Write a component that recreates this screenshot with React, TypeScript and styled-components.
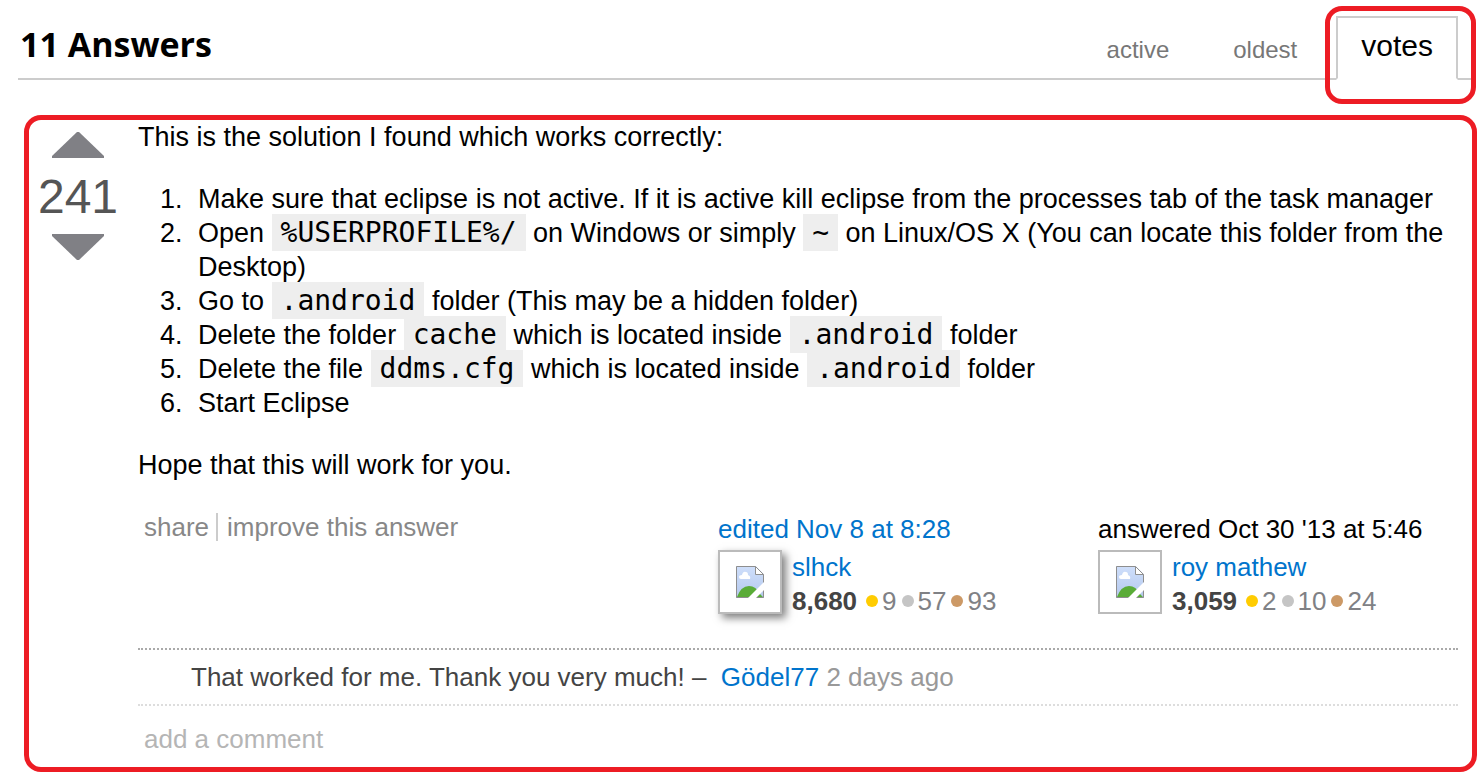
import React from "react";
import styled, { createGlobalStyle, css } from "styled-components";

const GlobalStyle = createGlobalStyle`
  *, *::before, *::after { box-sizing: border-box; }
  body {
    margin: 0;
    background: #fff;
    color: #000;
    font-family: Arial, "Liberation Sans", sans-serif;
    font-size: 26px;
    line-height: 34px;
  }
`;

const Page = styled.main`
  padding: 0 7px 8px 0;
`;

const Header = styled.header`
  display: flex;
  align-items: stretch;
  justify-content: space-between;
  height: 80px;
  margin: 0 5px 35px 18px;
  border-bottom: 2px solid #ccc;
`;

const Title = styled.h2`
  margin: 0;
  padding: 22px 0 0 2px;
  font-family: "Trebuchet MS", "Open Sans", sans-serif;
  font-size: 34px;
  font-weight: 700;
  line-height: 44px;
`;

const Tabs = styled.nav`
  display: flex;
  align-items: flex-start;
`;

const tabBase = css`
  text-decoration: none;
  white-space: nowrap;
`;

const Tab = styled.a`
  ${tabBase}
  margin: 33px 32px 0;
  color: #777;
  font-size: 24px;
`;

const ActiveTabWrap = styled.div`
  position: relative;
  margin: 16px 14px 0 7px;
`;

const ActiveTab = styled.a`
  ${tabBase}
  display: block;
  height: 64px;
  padding: 11px 23px 0;
  border: 2px solid #ccc;
  border-bottom-color: #fff;
  background: #fff;
  color: #000;
  font-size: 30px;
`;

const TabHighlight = styled.span`
  position: absolute;
  inset: -10px -18px -24px -11px;
  border: 5px solid #ed1c24;
  border-radius: 17px;
  pointer-events: none;
`;

const Answer = styled.article`
  display: flex;
  gap: 11px;
  margin-left: 24px;
  padding-right: 14px;
  border: 5px solid #ed1c24;
  border-radius: 17px;
`;

const Votes = styled.div`
  display: flex;
  flex: 0 0 98px;
  flex-direction: column;
  align-items: center;
  padding-top: 11px;
`;

const VoteButton = styled.button`
  display: block;
  padding: 0;
  border: 0;
  background: none;
  cursor: pointer;

  svg { display: block; }
`;

const Score = styled.span`
  margin: 10px 0 8px;
  color: #555;
  font-size: 48px;
  line-height: 56px;
`;

const Body = styled.div`
  flex: 1;
  min-width: 0;
`;

const Post = styled.div`
  font-size: 27px;

  p { margin: 0 0 28px; }
  ol { margin: 0 0 28px; padding-left: 52px; }
  li { padding-left: 8px; }
`;

const Code = styled.code`
  padding: 2px 9px;
  background: #eee;
  font-family: "DejaVu Sans Mono", monospace;
  font-size: 28px;
  line-height: 1;
`;

const Footer = styled.footer`
  display: flex;
  gap: 20px;
  height: 138px;
`;

const Menu = styled.div`
  display: flex;
  flex: 1;
  align-items: flex-start;
  padding-left: 6px;
`;

const MenuLink = styled.a`
  color: #888;
  text-decoration: none;

  & + & {
    margin: 3px 0 0 7px;
    padding-left: 9px;
    border-left: 2px solid #ccc;
    line-height: 28px;
  }
`;

const UserCard = styled.section`
  flex: 0 0 360px;
  padding-top: 2px;
`;

const Action = styled.div`
  color: #000;
`;

const UserRow = styled.div`
  display: flex;
  gap: 10px;
  margin-top: 4px;
`;

const Avatar = styled.a<{ $raised?: boolean }>`
  display: flex;
  align-items: center;
  justify-content: center;
  width: 64px;
  height: 64px;
  border: 2px solid #bbb;
  background: #fff;
  box-shadow: ${(p) => (p.$raised ? "4px 4px 8px rgba(0, 0, 0, 0.5)" : "none")};
`;

const BlueLink = styled.a`
  color: #0074cc;
  text-decoration: none;
`;

const Reputation = styled.div`
  display: flex;
  align-items: center;
  color: #808185;

  strong { margin-right: 9px; color: #444; }
`;

const Badge = styled.span<{ $color: string }>`
  display: flex;
  align-items: center;
  gap: 4px;
  margin-right: 5px;

  &::before {
    content: "";
    width: 12px;
    height: 12px;
    border-radius: 50%;
    background: ${(p) => p.$color};
  }
`;

const Comment = styled.div`
  padding: 10px 0 10px 53px;
  border-top: 2px dotted #aaa;
  border-bottom: 2px dotted #ddd;
  color: #444;
`;

const CommentDate = styled.span`
  color: #999;
`;

const AddComment = styled.a`
  display: block;
  padding: 16px 6px 11px;
  color: #b5b5b5;
  text-decoration: none;
`;

const Arrow = ({ down }: { down?: boolean }) => (
  <svg width="54" height="28" viewBox="0 0 54 28" aria-hidden="true">
    <path
      d={down ? "M1 1h52v2L28 27h-2L1 3z" : "M26 1h2l25 24v2H1v-2z"}
      fill="#808085"
    />
  </svg>
);

const MissingImage = () => (
  <svg width="28" height="32" viewBox="0 0 28 32" aria-hidden="true">
    <defs>
      <linearGradient id="sky" x1="0" y1="0" x2="0" y2="1">
        <stop offset="0" stopColor="#cfdffb" />
        <stop offset="1" stopColor="#b4c8ec" />
      </linearGradient>
    </defs>
    <path d="M0 0h20l8 8v24H0z" fill="url(#sky)" />
    <path d="M3 11q0-2 3-2 1-4 4-3 2 0 2 3 3 1 2 4H5q-2 0-2-2z" fill="#fff" />
    <path d="M1 31q4-11 12-11 7 0 11 8l3 3z" fill="#5aac37" />
    <path d="M19.5 0.5v8h8z" fill="#fff" />
    <path
      d="M0.5 0.5h19l8 8v23h-27zM19.5 0.5v8h8"
      fill="none"
      stroke="#8e8e8e"
    />
    <path d="M20 0h8v8z" fill="#fff" />
    <path d="M12 32L28 16v8l-8 8z" fill="#fff" />
  </svg>
);

type UserProps = {
  action: React.ReactNode;
  name: string;
  reputation: string;
  badges: [number, number, number];
  raised?: boolean;
};

const badgeColors = ["#ffcc01", "#c5c5c5", "#cc9966"];

const User = ({ action, name, reputation, badges, raised }: UserProps) => (
  <UserCard>
    <Action>{action}</Action>
    <UserRow>
      <Avatar href="#" aria-label={name} $raised={raised}>
        <MissingImage />
      </Avatar>
      <div>
        <BlueLink href="#">{name}</BlueLink>
        <Reputation>
          <strong>{reputation}</strong>
          {badges.map((count, i) => (
            <Badge key={badgeColors[i]} $color={badgeColors[i]}>
              {count}
            </Badge>
          ))}
        </Reputation>
      </div>
    </UserRow>
  </UserCard>
);

export default function App() {
  return (
    <Page>
      <GlobalStyle />
      <Header>
        <Title>11 Answers</Title>
        <Tabs>
          <Tab href="#">active</Tab>
          <Tab href="#">oldest</Tab>
          <ActiveTabWrap>
            <ActiveTab href="#">votes</ActiveTab>
            <TabHighlight />
          </ActiveTabWrap>
        </Tabs>
      </Header>

      <Answer>
        <Votes>
          <VoteButton aria-label="Up vote"><Arrow /></VoteButton>
          <Score>241</Score>
          <VoteButton aria-label="Down vote"><Arrow down /></VoteButton>
        </Votes>
        <Body>
          <Post>
            <p>This is the solution I found which works correctly:</p>
            <ol>
              <li>
                Make sure that eclipse is not active. If it is active kill eclipse from the
                processes tab of the task manager
              </li>
              <li>
                Open <Code>%USERPROFILE%/</Code> on Windows or simply <Code>~</Code> on Linux/OS X
                (You can locate this folder from the Desktop)
              </li>
              <li>
                Go to <Code>.android</Code> folder (This may be a hidden folder)
              </li>
              <li>
                Delete the folder <Code>cache</Code> which is located inside{" "}
                <Code>.android</Code> folder
              </li>
              <li>
                Delete the file <Code>ddms.cfg</Code> which is located inside{" "}
                <Code>.android</Code> folder
              </li>
              <li>Start Eclipse</li>
            </ol>
            <p>Hope that this will work for you.</p>
          </Post>

          <Footer>
            <Menu>
              <MenuLink href="#">share</MenuLink>
              <MenuLink href="#">improve this answer</MenuLink>
            </Menu>
            <User
              action={<BlueLink href="#">edited Nov 8 at 8:28</BlueLink>}
              name="slhck"
              reputation="8,680"
              badges={[9, 57, 93]}
              raised
            />
            <User
              action="answered Oct 30 '13 at 5:46"
              name="roy mathew"
              reputation="3,059"
              badges={[2, 10, 24]}
            />
          </Footer>

          <Comment>
            That worked for me. Thank you very much! –&nbsp; <BlueLink href="#">Gödel77</BlueLink>{" "}
            <CommentDate>2 days ago</CommentDate>
          </Comment>
          <AddComment href="#">add a comment</AddComment>
        </Body>
      </Answer>
    </Page>
  );
}
